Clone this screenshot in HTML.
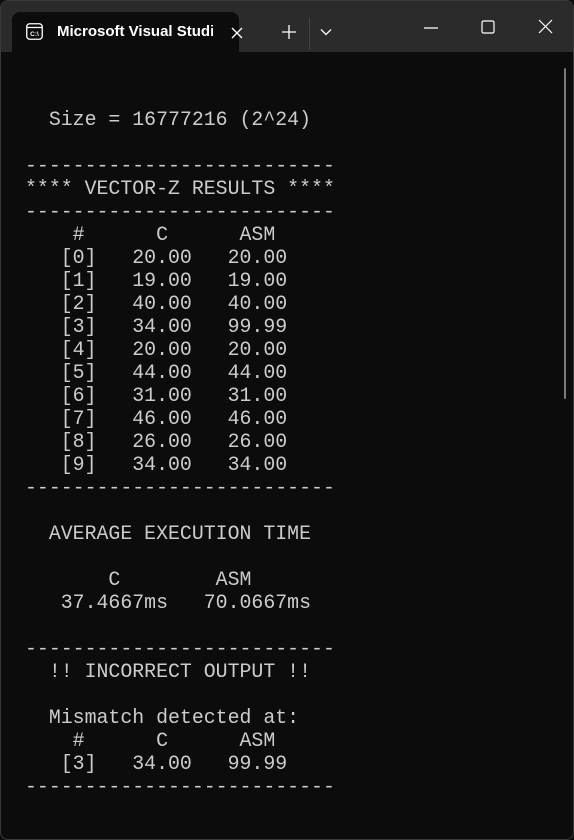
<!DOCTYPE html>
<html><head><meta charset="utf-8"><style>
html,body{margin:0;padding:0;background:#0c0c0c;width:574px;height:840px;overflow:hidden}
.win{position:absolute;left:0;top:0;width:572px;height:838px;border:1px solid #3a3a3a;border-radius:8px;background:#0c0c0c;overflow:hidden}
.bar{position:absolute;left:0;top:0;width:574px;height:51px;background:#2b2b2b}
.tab{position:absolute;left:11px;top:11px;width:227px;height:41px;background:#0c0c0c;border-radius:8px 8px 0 0}
.title{position:absolute;left:45px;top:11px;width:156px;overflow:hidden;white-space:nowrap;font:600 15px "Liberation Sans",sans-serif;color:#fff}
pre{position:absolute;left:24px;top:106.5px;margin:0;font-family:"Liberation Mono",monospace;font-size:19.87px;line-height:23px;color:#cccccc}
svg{position:absolute}
.sb{position:absolute;left:563px;top:67px;width:2px;height:331px;background:#7a7a7a;border-radius:1px}
</style></head><body><div class="win">
<div class="bar"></div>
<div class="tab">
<svg style="left:14px;top:11px" width="17" height="17" viewBox="0 0 17 17"><rect x="0.75" y="0.75" width="15.5" height="15.5" rx="3" fill="none" stroke="#fff" stroke-width="1.3"/><line x1="1" y1="4.5" x2="16" y2="4.5" stroke="#fff" stroke-width="1.2"/><text x="8.5" y="13.2" font-family="Liberation Sans" font-size="6.5" font-weight="bold" fill="#fff" text-anchor="middle">C:\</text></svg>
<div class="title">Microsoft Visual Studio Debug Console</div>
<svg style="left:218px;top:14px" width="14" height="14" viewBox="0 0 14 14"><path d="M2 2L12 12M12 2L2 12" stroke="#fff" stroke-width="1.3"/></svg>
</div>
<svg style="left:280px;top:23px" width="16" height="16" viewBox="0 0 16 16"><path d="M8 1V15M1 8H15" stroke="#fff" stroke-width="1.3"/></svg>
<div style="position:absolute;left:308px;top:17px;width:1px;height:32px;background:#444"></div>
<svg style="left:319px;top:27px" width="12" height="8" viewBox="0 0 12 8"><path d="M1 1.5L6 6.5L11 1.5" fill="none" stroke="#fff" stroke-width="1.3"/></svg>
<svg style="left:423px;top:25px" width="14" height="4" viewBox="0 0 14 4"><path d="M0 2H14" stroke="#fff" stroke-width="1.2"/></svg>
<svg style="left:480px;top:19px" width="14" height="14" viewBox="0 0 14 14"><rect x="1" y="1" width="12" height="12" rx="1.5" fill="none" stroke="#fff" stroke-width="1.2"/></svg>
<svg style="left:537px;top:18px" width="15" height="15" viewBox="0 0 15 15"><path d="M1 1L14 14M14 1L1 14" stroke="#fff" stroke-width="1.2"/></svg>
<div class="sb"></div>
<pre>  Size = 16777216 (2^24)

--------------------------
**** VECTOR-Z RESULTS ****
--------------------------
    #      C      ASM
   [0]   20.00   20.00
   [1]   19.00   19.00
   [2]   40.00   40.00
   [3]   34.00   99.99
   [4]   20.00   20.00
   [5]   44.00   44.00
   [6]   31.00   31.00
   [7]   46.00   46.00
   [8]   26.00   26.00
   [9]   34.00   34.00
--------------------------

  AVERAGE EXECUTION TIME

       C        ASM
   37.4667ms   70.0667ms

--------------------------
  !! INCORRECT OUTPUT !!

  Mismatch detected at:
    #      C      ASM
   [3]   34.00   99.99
--------------------------</pre>
</div></body></html>
